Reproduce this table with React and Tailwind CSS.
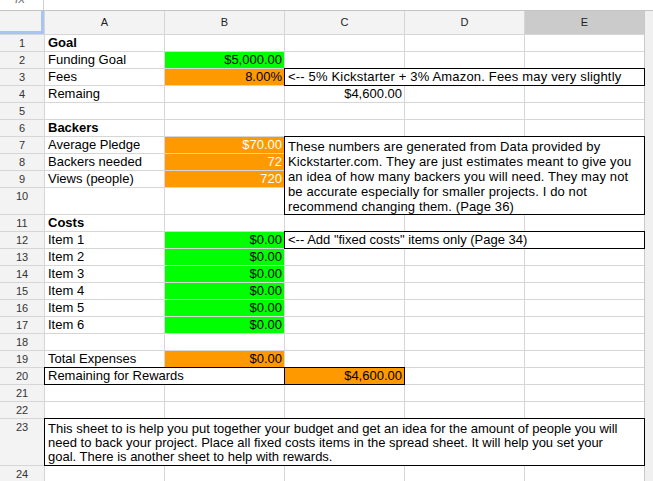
import React from 'react';

const font = "font-['Liberation_Sans',Arial,sans-serif]";
const cellBase = 'px-[3px] text-[13px] leading-[16px] whitespace-nowrap overflow-hidden';
const numBase = 'bg-[#f3f3f3] text-center text-[11px] leading-[16px] text-[#333]';
const boxed = 'relative z-10 ring-1 ring-black';

function RowNum({ n }) {
  return <div className={numBase}>{n}</div>;
}

function Cell({ children, className = '', bg = 'bg-white', color = 'text-black' }) {
  return <div className={`${cellBase} ${bg} ${color} ${className}`}>{children}</div>;
}

// plain row: number, A, B, C, D, E
function Row({ n, a, b, c, bold, bg, right }) {
  return (
    <>
      <RowNum n={n} />
      <Cell className={bold ? 'font-bold' : ''}>{a}</Cell>
      <Cell className="text-right pr-[2px]" bg={bg}>{b}</Cell>
      {right ? (
        right
      ) : (
        <>
          <Cell className="text-right pr-[2px]">{c}</Cell>
          <Cell />
          <Cell />
        </>
      )}
    </>
  );
}

export default function App() {
  const headers = ['A', 'B', 'C', 'D', 'E'];
  const green = 'bg-[#00ff00]';
  const orange = 'bg-[#ff9900]';

  return (
    <div className={`w-[653px] h-[481px] overflow-hidden bg-white ${font}`}>
      {/* formula bar, mostly scrolled away */}
      <div className="h-[11px] flex border-b border-[#c4c4c4] overflow-hidden">
        <div className="w-[44px] border-r border-[#d0d0d0] overflow-hidden">
          <div className="-mt-[9px] pl-[15px] text-[13px] italic text-[#777] leading-[16px]">fx</div>
        </div>
      </div>

      <div className="flex">
        <div className="grid gap-px bg-[#d6d6d6] grid-cols-[44px_repeat(5,119px)] grid-rows-[23px_repeat(9,16px)_26px_repeat(12,16px)_46px_16px]">
          {/* header row */}
          <div className="bg-[#f3f3f3] border-r-[3px] border-b-[3px] border-[#a9c4f2]" />
          {headers.map((h) => (
            <div
              key={h}
              className={`${h === 'E' ? 'bg-[#cbcbcb]' : 'bg-[#f3f3f3]'} text-center text-[11px] leading-[23px] text-[#222]`}
            >
              {h}
            </div>
          ))}

          <Row n={1} a="Goal" bold />
          <Row n={2} a="Funding Goal" b="$5,000.00" bg={green} />
          <Row
            n={3}
            a="Fees"
            b="8.00%"
            bg={orange}
            right={
              <Cell className={`col-span-3 tracking-[0.18px] ${boxed}`}>
                {'<-- 5% Kickstarter + 3% Amazon. Fees may very slightly'}
              </Cell>
            }
          />
          <Row n={4} a="Remaing" c="$4,600.00" />
          <Row n={5} />
          <Row n={6} a="Backers" bold />

          <RowNum n={7} />
          <Cell>Average Pledge</Cell>
          <Cell className="text-right pr-[2px]" bg={orange} color="text-white">$70.00</Cell>
          <div className={`col-span-3 row-span-4 bg-white pl-[3px] pt-[2px] text-[13px] leading-[15px] tracking-[0.12px] text-black whitespace-nowrap ${boxed}`}>
            These numbers are generated from Data provided by
            <br />
            Kickstarter.com. They are just estimates meant to give you
            <br />
            an idea of how many backers you will need. They may not
            <br />
            be accurate especially for smaller projects. I do not
            <br />
            recommend changing them. (Page 36)
          </div>
          <RowNum n={8} />
          <Cell>Backers needed</Cell>
          <Cell className="text-right pr-[2px]" bg={orange} color="text-white">72</Cell>
          <RowNum n={9} />
          <Cell>Views (people)</Cell>
          <Cell className="text-right pr-[2px]" bg={orange} color="text-white">720</Cell>
          <RowNum n={10} />
          <Cell />
          <Cell />

          <Row n={11} a="Costs" bold />
          <Row
            n={12}
            a="Item 1"
            b="$0.00"
            bg={green}
            right={<Cell className={`col-span-3 ${boxed}`}>{'<-- Add "fixed costs" items only (Page 34)'}</Cell>}
          />
          <Row n={13} a="Item 2" b="$0.00" bg={green} />
          <Row n={14} a="Item 3" b="$0.00" bg={green} />
          <Row n={15} a="Item 4" b="$0.00" bg={green} />
          <Row n={16} a="Item 5" b="$0.00" bg={green} />
          <Row n={17} a="Item 6" b="$0.00" bg={green} />
          <Row n={18} />
          <Row n={19} a="Total Expenses" b="$0.00" bg={orange} />

          <RowNum n={20} />
          <Cell className={`col-span-2 ${boxed}`}>Remaining for Rewards</Cell>
          <Cell className={`text-right pr-[2px] ${boxed}`} bg={orange}>$4,600.00</Cell>
          <Cell />
          <Cell />

          <Row n={21} />
          <Row n={22} />

          <RowNum n={23} />
          <div className={`col-span-5 bg-white pl-[3px] pt-[3px] text-[13px] leading-[14px] text-black whitespace-nowrap ${boxed}`}>
            This sheet to is help you put together your budget and get an idea for the amount of people you will
            <br />
            need to back your project. Place all fixed costs items in the spread sheet. It will help you set your
            <br />
            goal. There is another sheet to help with rewards.
          </div>

          <Row n={24} />
        </div>
        <div className="w-[9px] border-l border-[#c8c8c8] bg-[#f0f0f0]" />
      </div>
    </div>
  );
}
